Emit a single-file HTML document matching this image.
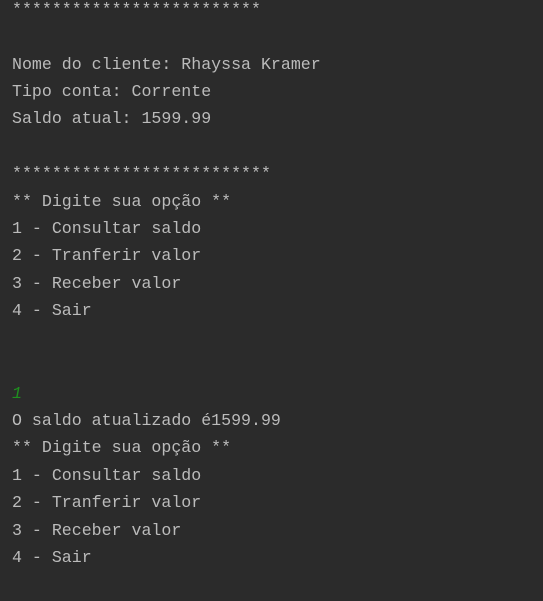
<!DOCTYPE html>
<html><head><meta charset="utf-8"><style>
html,body{margin:0;padding:0;background:#2b2b2b;width:543px;height:601px;overflow:hidden}
pre{position:absolute;left:12px;top:-4.2px;margin:0;font-family:"Liberation Mono","DejaVu Sans Mono",monospace;font-size:16.6px;line-height:27.4px;color:#bbbbbb}
.g{color:#1f8f1f;font-style:italic}
</style></head><body><pre>*************************

Nome do cliente: Rhayssa Kramer
Tipo conta: Corrente
Saldo atual: 1599.99

**************************
** Digite sua opção **
1 - Consultar saldo
2 - Tranferir valor
3 - Receber valor
4 - Sair


<span class="g">1</span>
O saldo atualizado é1599.99
** Digite sua opção **
1 - Consultar saldo
2 - Tranferir valor
3 - Receber valor
4 - Sair</pre></body></html>
